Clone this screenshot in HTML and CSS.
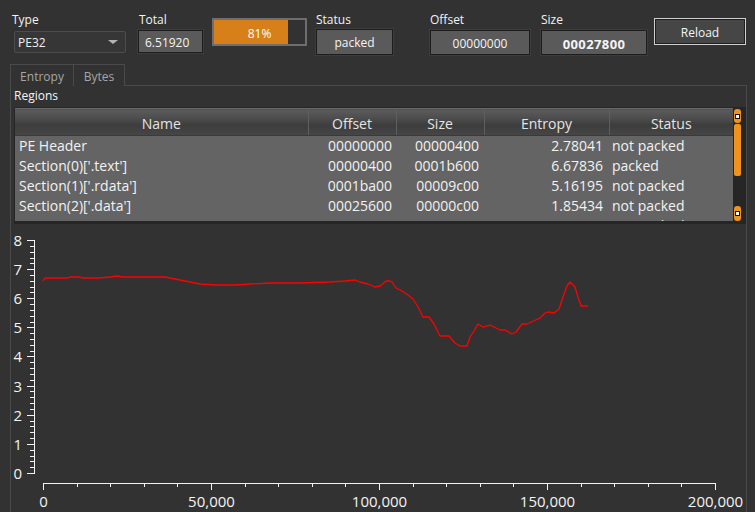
FILE: index.html
```html
<!DOCTYPE html>
<html>
<head>
<meta charset="utf-8">
<title>Entropy</title>
<link rel="stylesheet" href="styles.css">
</head>
<body>
<div class="toolbar">
  <div class="group g-type">
    <div class="lbl">Type</div>
    <div class="combo"><span>PE32</span><span class="arrow"></span></div>
  </div>
  <div class="group g-total">
    <div class="lbl">Total</div>
    <div class="field total">6.51920</div>
  </div>
  <div class="progress">
    <div class="bar-track"><div class="bar-fill" style="width:81%"></div></div>
    <span class="bar-text">81%</span>
  </div>
  <div class="group g-status">
    <div class="lbl">Status</div>
    <div class="field center status">packed</div>
  </div>
  <div class="group g-offset">
    <div class="lbl">Offset</div>
    <div class="field center offset">00000000</div>
  </div>
  <div class="group g-size">
    <div class="lbl">Size</div>
    <div class="field center size">00027800</div>
  </div>
  <button class="reload">Reload</button>
</div>

<div class="tabs">
  <div class="tab tab-entropy">Entropy</div>
  <div class="tab tab-bytes">Bytes</div>
  <div class="tab-fill"></div>
</div>

<div class="pane">
  <div class="regions">Regions</div>
  <div class="tablewrap">
    <div class="tablearea">
      <table class="regions-table">
        <colgroup>
          <col class="c-name"><col class="c-off"><col class="c-size"><col class="c-ent"><col class="c-stat">
        </colgroup>
        <thead>
          <tr><th>Name</th><th>Offset</th><th>Size</th><th>Entropy</th><th>Status</th></tr>
        </thead>
        <tbody>
          <tr><td class="t-name">PE Header</td><td class="t-off">00000000</td><td class="t-size">00000400</td><td class="t-ent">2.78041</td><td class="t-stat">not packed</td></tr>
          <tr><td class="t-name">Section(0)['.text']</td><td class="t-off">00000400</td><td class="t-size">0001b600</td><td class="t-ent">6.67836</td><td class="t-stat">packed</td></tr>
          <tr><td class="t-name">Section(1)['.rdata']</td><td class="t-off">0001ba00</td><td class="t-size">00009c00</td><td class="t-ent">5.16195</td><td class="t-stat">not packed</td></tr>
          <tr><td class="t-name">Section(2)['.data']</td><td class="t-off">00025600</td><td class="t-size">00000c00</td><td class="t-ent">1.85434</td><td class="t-stat">not packed</td></tr>
          <tr><td class="t-name">Section(3)['.rsrc']</td><td class="t-off">00026200</td><td class="t-size">00000e00</td><td class="t-ent">4.73059</td><td class="t-stat">not packed</td></tr>
        </tbody>
      </table>
    </div>
    <div class="vscroll">
      <div class="sb-btn"></div>
      <div class="sb-handle"></div>
      <div class="sb-track"></div>
      <div class="sb-btn sb-btn-bottom"></div>
    </div>
  </div>

  <svg class="chart" width="735" height="288" viewBox="0 0 735 288" xmlns="http://www.w3.org/2000/svg">
    <g transform="translate(-11,-224)">
      <g class="axis" stroke="#f2f2f2" stroke-width="1" fill="none" shape-rendering="crispEdges">
        <path d="M34.5 240 V474"/>
        <path d="M27 240.5 H35 M27 269.5 H35 M27 298.5 H35 M27 327.5 H35 M27 356.5 H35 M27 386.5 H35 M27 415.5 H35 M27 444.5 H35 M27 473.5 H35"/>
        <path d="M30 246.5 H35 M30 252.5 H35 M30 258.5 H35 M30 263.5 H35 M30 275.5 H35 M30 281.5 H35 M30 287.5 H35 M30 292.5 H35 M30 304.5 H35 M30 310.5 H35 M30 316.5 H35 M30 322.5 H35 M30 333.5 H35 M30 339.5 H35 M30 345.5 H35 M30 351.5 H35 M30 362.5 H35 M30 368.5 H35 M30 374.5 H35 M30 380.5 H35 M30 391.5 H35 M30 397.5 H35 M30 403.5 H35 M30 409.5 H35 M30 421.5 H35 M30 426.5 H35 M30 432.5 H35 M30 438.5 H35 M30 450.5 H35 M30 456.5 H35 M30 461.5 H35 M30 467.5 H35"/>
        <path d="M43 483.5 H716"/>
        <path d="M43.5 483 V490 M211.5 483 V490 M379.5 483 V490 M547.5 483 V490 M715.5 483 V490"/>
        <path d="M77.5 483 V487 M110.5 483 V487 M144.5 483 V487 M177.5 483 V487 M245.5 483 V487 M278.5 483 V487 M312.5 483 V487 M345.5 483 V487 M413.5 483 V487 M446.5 483 V487 M480.5 483 V487 M513.5 483 V487 M581.5 483 V487 M614.5 483 V487 M648.5 483 V487 M681.5 483 V487"/>
      </g>
      <g class="ylabels">
        <text x="22" y="245.5">8</text>
        <text x="22" y="274.5">7</text>
        <text x="22" y="303.5">6</text>
        <text x="22" y="332.5">5</text>
        <text x="22" y="361.5">4</text>
        <text x="22" y="391.5">3</text>
        <text x="22" y="420.5">2</text>
        <text x="22" y="449.5">1</text>
        <text x="22" y="478.5">0</text>
      </g>
      <g class="xlabels">
        <text x="43.5" y="507">0</text>
        <text x="211.5" y="507">50,000</text>
        <text x="379.5" y="507">100,000</text>
        <text x="547.5" y="507">150,000</text>
        <text x="715.5" y="507">200,000</text>
      </g>
      <polyline class="series" fill="none" stroke="#ff0000" stroke-width="1.3" stroke-linejoin="round"
        points="43,281 45,278 60,278 68,278 70,277 80,277 82,278 98,278 110,277 118,276 122,277 140,277 165,277 170,278 185,281 200,284 215,285 235,285 250,284 270,283 300,283 330,282 345,281 355,280 360,282 368,284 375,287 380,286 386,281 390,281 392,282 396,288 402,291 408,295 413,299 418,307 423,317 429,317 434,324 440,336 449,336 455,343 460,346 467,346 470,337 474,331 478,324 483,327 490,325 500,330 505,330 512,334 516,332 522,324 527,324 540,318 545,313 548,312 554,313 559,309 563,297 567,286 570,282 575,287 578,297 581,306 588,306"/>
    </g>
  </svg>
</div>
</body>
</html>
```

FILE: styles.css
```css
* {
  box-sizing: border-box;
  margin: 0;
  padding: 0;
}

html, body {
  width: 755px;
  height: 512px;
  overflow: hidden;
  background: #323232;
}

body {
  font-family: "Open Sans", "Noto Sans", sans-serif;
  font-size: 12px;
  color: #ececec;
}

/* ---------- toolbar ---------- */
.toolbar {
  display: flex;
  align-items: flex-start;
  height: 64px;
  padding: 10px 0 0 12px;
}

.group {
  display: flex;
  flex-direction: column;
}

.lbl {
  font-size: 12px;
  line-height: 16px;
  padding-top: 2px;
  height: 18px;
  color: #f2f2f2;
}

.combo {
  margin: 3px 0 0 2px;
  width: 112px;
  height: 22px;
  border: 1px solid #4c4c4c;
  border-radius: 2px;
  background: #363636;
  display: flex;
  align-items: center;
  padding: 2px 0 0 3px;
  line-height: 16px;
  color: #f0f0f0;
}

.combo .arrow {
  margin-left: auto;
  margin-right: 7px;
  margin-bottom: 2px;
  width: 0;
  height: 0;
  border-left: 5px solid transparent;
  border-right: 5px solid transparent;
  border-top: 4px solid #b4b4b4;
}

.g-total {
  margin-left: 12px;
}
.g-total .lbl {
  padding-left: 1px;
}

.field {
  background: #5a5a5a;
  border: 1px solid #1d1d1d;
  box-shadow: 0 0 0 1px #3c3c3c;
  color: #f4f4f4;
  display: flex;
  align-items: center;
  line-height: 16px;
  padding-top: 2px;
}

.field.center {
  justify-content: center;
}

.total {
  margin-top: 2px;
  width: 65px;
  height: 23px;
  padding-left: 6px;
}

.progress {
  margin: 8px 0 0 9px;
  width: 95px;
  height: 28px;
  display: grid;
}

.bar-track,
.bar-text {
  grid-area: 1 / 1;
}

.bar-track {
  border: 2px solid #6e6e6e;
  background: #323232;
}

.bar-fill {
  height: 100%;
  background: #d7801a;
}

.bar-text {
  align-self: center;
  justify-self: center;
  margin-top: 3px;
  color: #ffffff;
  line-height: 16px;
}

.g-status {
  margin-left: 9px;
}
.status {
  margin-top: 1px;
  width: 77px;
  height: 26px;
}

.g-offset {
  margin-left: 37px;
}
.offset {
  margin-top: 2px;
  width: 100px;
  height: 25px;
}

.g-size {
  margin-left: 11px;
}
.size {
  margin-top: 2px;
  width: 106px;
  height: 25px;
  font-weight: bold;
  font-size: 13px;
  letter-spacing: 0.4px;
}

.reload {
  margin: 8px 0 0 7px;
  width: 92px;
  height: 27px;
  background: #464646;
  border: 1px solid #cfcfcf;
  box-shadow: inset 0 0 0 1px #1e1e1e;
  color: #f4f4f4;
  font-family: inherit;
  font-size: 12px;
  line-height: 16px;
  padding-top: 3px;
}

/* ---------- tabs ---------- */
.tabs {
  display: flex;
  height: 22px;
  margin: 0 8px 0 10px;
}

.tab {
  height: 22px;
  border: 1px solid #4a4a4a;
  border-bottom: none;
  color: #a6a6a6;
  line-height: 18px;
  padding-top: 3px;
  text-align: center;
}

.tab-entropy {
  width: 64px;
}

.tab-bytes {
  width: 51px;
  border-left: none;
}

.tab-fill {
  flex: 1;
  border-bottom: 1px solid #4a4a4a;
}

/* ---------- pane ---------- */
.pane {
  margin: 0 8px 0 10px;
  height: 426px;
  border-left: 1px solid #4a4a4a;
  border-right: 1px solid #4a4a4a;
}

.regions {
  padding: 2px 0 0 3px;
  line-height: 16px;
  height: 18px;
  color: #f4f4f4;
}

.tablewrap {
  margin: 3px 0 0 3px;
  width: 732px;
  height: 117px;
  border: 1px solid #262626;
  border-bottom: 3px solid #262626;
  display: flex;
}

.tablearea {
  width: 718px;
  height: 113px;
  overflow: hidden;
  background: #646464;
}

.regions-table {
  width: 718px;
  border-collapse: collapse;
  table-layout: fixed;
  font-size: 14px;
}

.c-name { width: 293px; }
.c-off { width: 88px; }
.c-size { width: 88px; }
.c-ent { width: 125px; }
.c-stat { width: 124px; }

.regions-table th {
  height: 27px;
  font-weight: normal;
  color: #e4e4e4;
  text-align: center;
  background: linear-gradient(#5c5c5c 0%, #4c4c4c 35%, #3d3d3d 60%, #464646 100%);
  border-top: 1px solid #6a6a6a;
  border-bottom: 1px solid #3a3a3a;
  border-left: 1px solid #5e5e5e;
  line-height: 18px;
  padding-top: 3px;
}

.regions-table th:first-child {
  border-left: none;
}

.regions-table td {
  height: 20px;
  line-height: 20px;
  color: #f2f2f2;
  white-space: nowrap;
  overflow: hidden;
  padding: 0;
}

.t-name { padding-left: 4px !important; }
.t-off { text-align: right; padding-right: 4px !important; }
.t-size { text-align: right; padding-right: 5px !important; }
.t-ent { text-align: right; padding-right: 6px !important; }
.t-stat { padding-left: 3px !important; }

.vscroll {
  width: 12px;
  height: 113px;
  background: #262626;
  display: flex;
  flex-direction: column;
  gap: 1px;
  padding: 1px 4px 0 1px;
}

.sb-btn {
  height: 14px;
  background: #f0921e;
  border-radius: 3px;
  display: flex;
  align-items: center;
  justify-content: center;
}

.sb-btn::after {
  content: "";
  width: 3px;
  height: 3px;
  background: #ffffff;
  border: 1px solid #111111;
}

.sb-btn-bottom {
  height: 15px;
}

.sb-handle {
  height: 52px;
  background: #f0921e;
  border-radius: 2px;
}

.sb-track {
  flex: 1;
}

/* ---------- chart ---------- */
.chart {
  display: block;
}

.chart text {
  font-family: "Open Sans", "Noto Sans", sans-serif;
  font-size: 15px;
  fill: #f4f4f4;
}

.ylabels text {
  text-anchor: end;
}

.xlabels text {
  text-anchor: middle;
}
```
